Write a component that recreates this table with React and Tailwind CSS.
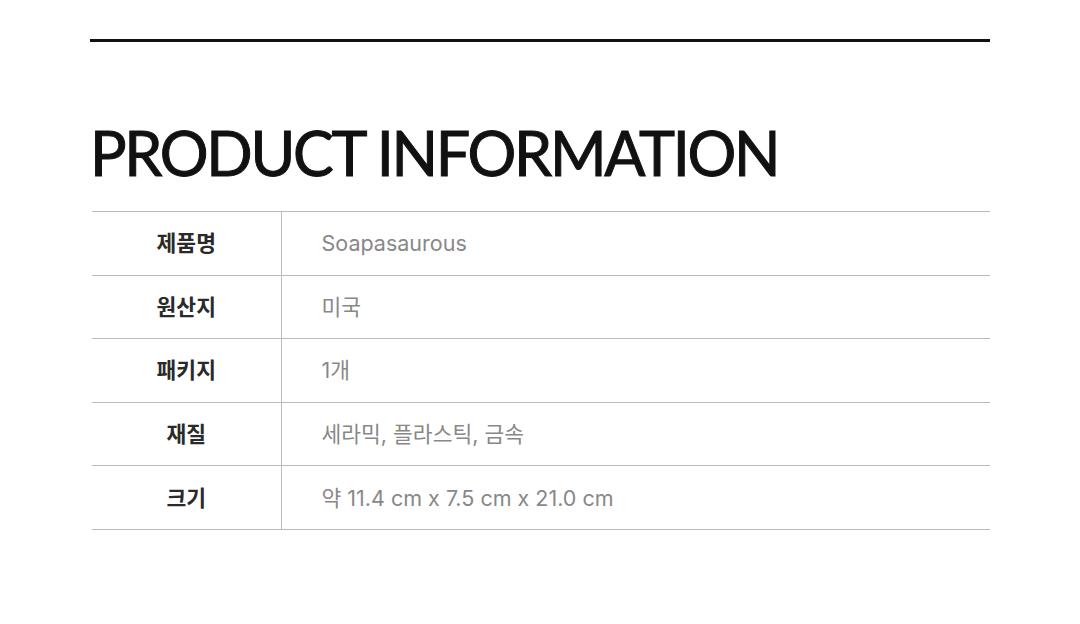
const rows = [
  { label: "제품명", value: "Soapasaurous" },
  { label: "원산지", value: "미국" },
  { label: "패키지", value: "1개" },
  { label: "재질", value: "세라믹, 플라스틱, 금속" },
  { label: "크기", value: "약 11.4 cm x 7.5 cm x 21.0 cm" },
];

export default function App() {
  return (
    <div className="w-[1080px] h-[624px] bg-white px-[90px] pt-[39px] font-['Inter','Noto_Sans_CJK_KR',sans-serif]">
      <div className="h-[3px] bg-[#111]" />
      <h1 className="mt-[76px] text-[61px] leading-[70px] font-normal tracking-[-2.3px] text-[#111] [-webkit-text-stroke:1px_#111] font-['Lato','Noto_Sans',sans-serif]">
        PRODUCT INFORMATION
      </h1>
      <table className="mt-[23px] ml-[2px] w-[898px] border-collapse">
        <tbody>
          {rows.map((r, i) => (
            <tr key={i} className="border-t border-b border-[#bbb] h-[63.6px]">
              <th className="w-[189px] border-r border-[#bbb] text-center text-[21.5px] font-bold text-[#2a2a2a]">
                {r.label}
              </th>
              <td className="pl-[40px] text-left text-[21.5px] text-[#888]">{r.value}</td>
            </tr>
          ))}
        </tbody>
      </table>
    </div>
  );
}
